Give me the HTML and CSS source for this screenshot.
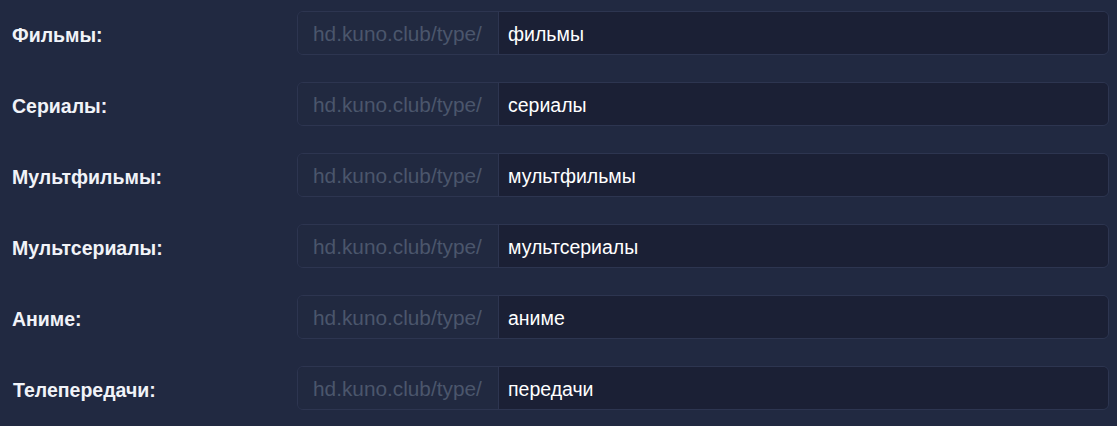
FILE: index.html
```html
<!DOCTYPE html>
<html lang="ru">
<head>
<meta charset="utf-8">
<title>Типы</title>
<link rel="stylesheet" href="styles.css">
</head>
<body>
<div class="form">
  <div class="row">
    <label class="label">Фильмы:</label>
    <div class="group"><span class="addon">hd.kuno.club/type/</span><span class="field">фильмы</span></div>
  </div>
  <div class="row">
    <label class="label">Сериалы:</label>
    <div class="group"><span class="addon">hd.kuno.club/type/</span><span class="field">сериалы</span></div>
  </div>
  <div class="row">
    <label class="label">Мультфильмы:</label>
    <div class="group"><span class="addon">hd.kuno.club/type/</span><span class="field">мультфильмы</span></div>
  </div>
  <div class="row">
    <label class="label">Мультсериалы:</label>
    <div class="group"><span class="addon">hd.kuno.club/type/</span><span class="field">мультсериалы</span></div>
  </div>
  <div class="row">
    <label class="label">Аниме:</label>
    <div class="group"><span class="addon">hd.kuno.club/type/</span><span class="field">аниме</span></div>
  </div>
  <div class="row">
    <label class="label label-last">Телепередачи:</label>
    <div class="group"><span class="addon">hd.kuno.club/type/</span><span class="field">передачи</span></div>
  </div>
</div>
</body>
</html>
```

FILE: styles.css
```css
html, body {
  margin: 0;
  padding: 0;
  background: #212941;
  height: 100%;
}
body {
  font-family: "Liberation Sans", Arial, sans-serif;
  font-size: 19.5px;
}
.form {
  display: flex;
  flex-direction: column;
  gap: 27px;
  padding: 11px 8px 0 12px;
}
.row {
  display: flex;
  align-items: center;
  height: 44px;
}
.label {
  width: 285px;
  flex: none;
  color: #f1f3f8;
  font-weight: bold;
  padding-top: 4px;
}
.label-last {
  padding-left: 1px;
  width: 284px;
}
.group {
  flex: 1;
  display: flex;
  height: 44px;
  box-sizing: border-box;
  border: 1px solid #2d3550;
  border-radius: 6px;
  overflow: hidden;
}
.addon {
  display: flex;
  align-items: center;
  padding: 2px 15px 0 15px;
  color: #4b566c;
  background: #212940;
  border-right: 1px solid #2d3550;
  width: 170px;
  flex: none;
  font-size: 20.8px;
  white-space: nowrap;
}
.field {
  flex: 1;
  display: flex;
  align-items: center;
  padding: 2px 10px 0 9px;
  color: #ffffff;
  background: #1b2035;
}
```
